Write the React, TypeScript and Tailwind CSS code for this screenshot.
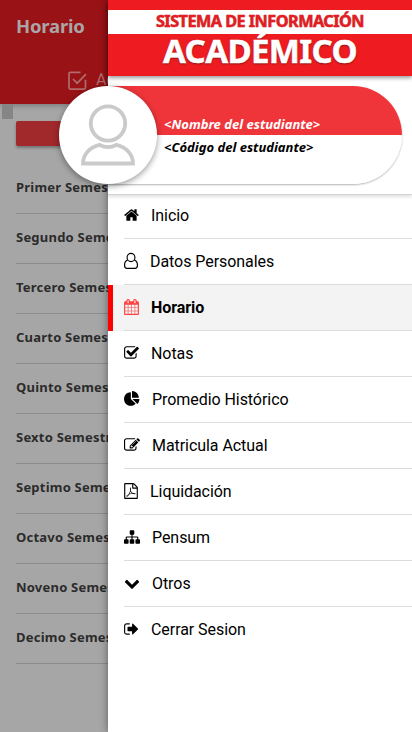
import React from "react";

type Icon = { box: string; w: string; d: string };

const icons: Record<string, Icon> = {
  home: { box: "64 0 1664 1792", w: "w-[15px]", d: "M1472 992v480q0 26-19 45t-45 19h-384v-384h-256v384h-384q-26 0-45-19t-19-45v-480q0-1 .5-3t.5-3l575-474 575 474q1 2 1 6zm223-69l-62 74q-8 9-21 11h-3q-13 0-21-7l-692-577-692 577q-12 8-24 7-13-2-21-11l-62-74q-8-10-7-23.5t11-21.5l719-599q32-26 76-26t76 26l244 204v-195q0-14 9-23t23-9h192q14 0 23 9t9 23v408l219 182q10 8 11 21.5t-7 23.5z" },
  user: { box: "0 0 1568 1792", w: "w-[14px]", d: "" },
  calendar: { box: "64 0 1664 1792", w: "w-[15px]", d: "M192 1664h288v-288h-288v288zm352 0h320v-288h-320v288zm-352-352h288v-320h-288v320zm352 0h320v-320h-320v320zm-352-384h288v-288h-288v288zm736 736h320v-288h-320v288zm-384-736h320v-288h-320v288zm768 736h288v-288h-288v288zm-384-352h320v-320h-320v320zm-352-864v-288q0-13-9.5-22.5t-22.5-9.5h-64q-13 0-22.5 9.5t-9.5 22.5v288q0 13 9.5 22.5t22.5 9.5h64q13 0 22.5-9.5t9.5-22.5zm736 864h288v-320h-288v320zm-384-384h320v-288h-320v288zm384 0h288v-288h-288v288zm32-480v-288q0-13-9.5-22.5t-22.5-9.5h-64q-13 0-22.5 9.5t-9.5 22.5v288q0 13 9.5 22.5t22.5 9.5h64q13 0 22.5-9.5t9.5-22.5zm384-64v1280q0 52-38 90t-90 38h-1408q-52 0-90-38t-38-90v-1280q0-52 38-90t90-38h128v-96q0-66 47-113t113-47h64q66 0 113 47t47 113v96h384v-96q0-66 47-113t113-47h64q66 0 113 47t47 113v96h128q52 0 90 38t38 90z" },
  check: { box: "64 0 1664 1792", w: "w-[15px]", d: "M1472 930v318q0 119-84.5 203.5t-203.5 84.5h-832q-119 0-203.5-84.5t-84.5-203.5v-832q0-119 84.5-203.5t203.5-84.5h832q63 0 117 25 15 7 18 23 3 17-9 29l-49 49q-10 10-23 10-3 0-9-2-23-6-45-6h-832q-66 0-113 47t-47 113v832q0 66 47 113t113 47h832q66 0 113-47t47-113v-254q0-13 9-22l64-64q10-10 23-10 6 0 12 3 20 8 20 29zm231-489l-814 814q-24 24-57 24t-57-24l-430-430q-24-24-24-57t24-57l110-110q24-24 57-24t57 24l263 263 647-647q24-24 57-24t57 24l110 110q24 24 24 57t-24 57z" },
  pie: { box: "0 0 1792 1792", w: "w-4", d: "M768 890l546 546q-106 108-247.5 168t-298.5 60q-209 0-385.5-103t-279.5-279.5-103-385.5 103-385.5 279.5-279.5 385.5-103v762zm187 6h773q0 157-60 298.5t-168 247.5zm709-128h-768v-768q209 0 385.5 103t279.5 279.5 103 385.5z" },
  edit: { box: "0 0 1792 1792", w: "w-4", d: "M888 1184l116-116-152-152-116 116v56h96v96h56zm440-720q-16-16-33 1l-350 350q-17 17-1 33t33-1l350-350q17-17 1-33zm80 594v190q0 119-84.5 203.5t-203.5 84.5h-832q-119 0-203.5-84.5t-84.5-203.5v-832q0-119 84.5-203.5t203.5-84.5h832q63 0 117 25 15 7 18 23 3 17-10 29l-49 49q-14 14-32 8-23-6-45-6h-832q-66 0-113 47t-47 113v832q0 66 47 113t113 47h832q66 0 113-47t47-113v-126q0-13 9-22l64-64q15-15 35-7t20 29zm-96-738l288 288-672 672h-288v-288zm444 132l-92 92-288-288 92-92q28-28 68-28t68 28l152 152q28 28 28 68t-28 68z" },
  pdf: { box: "128 0 1536 1792", w: "w-[14px]", d: "M1596 380q28 28 48 76t20 88v1152q0 40-28 68t-68 28h-1344q-40 0-68-28t-28-68v-1600q0-40 28-68t68-28h896q40 0 88 20t76 48zm-444-244v376h376q-10-29-22-41l-313-313q-12-12-41-22zm384 1528v-1024h-416q-40 0-68-28t-28-68v-416h-768v1536h1280zm-514-593q33 26 84 56 59-7 117-7 147 0 177 49 16 22 2 52 0 1-1 2l-2 2v1q-6 38-71 38-48 0-115-20t-130-53q-221 24-392 83-153 262-242 262-15 0-28-7l-24-12q-1-1-6-5-10-10-6-36 9-40 56-91.5t132-96.5q14-9 23 6 2 2 2 4 52-85 107-197 68-136 104-262-24-82-30.5-159.5t6.5-127.5q11-40 42-40h22q23 0 35 15 18 21 9 68-2 6-4 8 1 3 1 8v30q-2 123-14 192 55 164 146 238zm-576 411q52-24 137-158-51 40-87.5 84t-49.5 74zm398-920q-15 42-2 132 1-7 7-44 0-3 7-43 1-4 4-8-1-1-1-2t-1-2q-1-22-13-36 0 1-1 2v1zm-124 661q135-54 284-81-2-1-13-9.5t-16-13.5q-76-67-127-176-27 86-83 197-30 56-45 83zm646-16q-24-24-140-24 76 28 124 28 14 0 18-1 0-1-2-3z" },
  sitemap: { box: "0 0 1792 1792", w: "w-4", d: "M1792 1248v320q0 40-28 68t-68 28h-320q-40 0-68-28t-28-68v-320q0-40 28-68t68-28h96v-192h-512v192h96q40 0 68 28t28 68v320q0 40-28 68t-68 28h-320q-40 0-68-28t-28-68v-320q0-40 28-68t68-28h96v-192h-512v192h96q40 0 68 28t28 68v320q0 40-28 68t-68 28h-320q-40 0-68-28t-28-68v-320q0-40 28-68t68-28h96v-192q0-52 38-90t90-38h512v-192h-96q-40 0-68-28t-28-68v-320q0-40 28-68t68-28h320q40 0 68 28t28 68v320q0 40-28 68t-68 28h-96v192h512q52 0 90 38t38 90v192h96q40 0 68 28t28 68z" },
  chevron: { box: "0 0 1792 1792", w: "w-4", d: "M1683 808l-742 741q-19 19-45 19t-45-19l-742-741q-19-19-19-45.5t19-45.5l166-165q19-19 45-19t45 19l531 531 531-531q19-19 45-19t45 19l166 165q19 19 19 45.500t-19 45.500z" },
  exit: { box: "64 0 1664 1792", w: "w-[15px]", d: "M704 1440q0 4 1 20t.5 26.5-3 23.5-10 19.5-20.5 6.5h-320q-119 0-203.5-84.5t-84.5-203.5v-704q0-119 84.5-203.5t203.5-84.5h320q13 0 22.5 9.5t9.5 22.5q0 4 1 20t.5 26.5-3 23.5-10 19.5-20.5 6.5h-320q-66 0-113 47t-47 113v704q0 66 47 113t113 47h312l11.5 1 11.5 3 8 5.5 7 9 2 13.5zm928-544q0 26-19 45l-544 544q-19 19-45 19t-45-19-19-45v-288h-448q-26 0-45-19t-19-45v-384q0-26 19-45t45-19h448v-288q0-26 19-45t45-19 45 19l544 544q19 19 19 45z" },
};

const menu = [
  ["home", "Inicio"],
  ["user", "Datos Personales"],
  ["calendar", "Horario"],
  ["check", "Notas"],
  ["pie", "Promedio Histórico"],
  ["edit", "Matricula Actual"],
  ["pdf", "Liquidación"],
  ["sitemap", "Pensum"],
  ["chevron", "Otros"],
  ["exit", "Cerrar Sesion"],
];

const semesters = ["Primer", "Segundo", "Tercero", "Cuarto", "Quinto", "Sexto", "Septimo", "Octavo", "Noveno", "Decimo"];

function Glyph({ name, active }: { name: string; active: boolean }) {
  const icon = icons[name];
  return (
    <svg viewBox={icon.box} className={`${icon.w} mb-[2px] h-4 shrink-0 overflow-visible ${active ? "text-[#ff4141]" : "text-black"}`} fill="currentColor">
      {name === "user" ? (
        <g fill="none" stroke="currentColor" strokeWidth="130">
          <ellipse cx="784" cy="510" rx="440" ry="460" />
          <path d="M400 800C170 870 64 1090 64 1370c0 200 110 358 270 358h900c160 0 270-158 270-358 0-280-106-500-336-570" />
        </g>
      ) : (
        <path d={icon.d} />
      )}
    </svg>
  );
}

export default function App() {
  return (
    <div className="relative flex h-[732px] w-[412px] overflow-hidden bg-[#a6a6a6] font-['Noto_Sans',sans-serif]">
      <main className="w-[108px] shrink-0 whitespace-nowrap">
        <header className="flex h-[104px] flex-col justify-between bg-[#981216] pb-[14px] pl-4 pt-3 shadow-[0_2px_5px_rgba(0,0,0,0.25)]">
          <h1 className="text-[18.5px] font-bold leading-7 tracking-[-0.2px] text-[#aaa6a6]">Horario</h1>
          <div className="flex items-center gap-[9px] pl-[52px] font-[Roboto,sans-serif] text-base leading-5 text-[#b06b6c]">
            <svg viewBox="0 0 19 19" className="h-[19px] w-[19px] shrink-0" fill="none" stroke="currentColor" strokeWidth="1.7">
              <path d="M12.5 1.3H2.3a1.3 1.3 0 0 0-1.3 1.3v14.2a1.3 1.3 0 0 0 1.3 1.3h13.9a1.3 1.3 0 0 0 1.3-1.3V8.7M5 8l4.2 4.2L18 3.2" />
            </svg>
            Actual
          </div>
        </header>
        <div className="ml-[2px] h-[15px] w-[11px] bg-[#858585]" />
        <div className="ml-4 mt-[2px] h-[25px] rounded-[2px] bg-[#a1282b] shadow-[0_2px_3px_rgba(0,0,0,0.3)]" />
        <ul className="ml-4 mt-[18px]">
          {semesters.map((name) => (
            <li key={name} className="flex h-[50px] items-center border-b border-[#8b8b8b] pb-[2px] text-[13px] font-bold tracking-[0.22px] text-[#2b2b2b]">
              {name} Semestre
            </li>
          ))}
        </ul>
      </main>

      <aside className="relative flex w-[304px] shrink-0 flex-col bg-white shadow-[0_0_8px_rgba(0,0,0,0.45)]">
        <div className="flex h-[76px] shrink-0 flex-col bg-[#ee1c21] pt-[10px] shadow-[0_2px_4px_rgba(0,0,0,0.4)]">
          <div className="flex h-6 items-center justify-center bg-white pb-[2px]">
            <span className="whitespace-nowrap text-[16.3px] font-bold leading-5 tracking-[-0.55px] text-[#e51d23] [-webkit-text-stroke:0.4px_#e51d23] [text-shadow:0_0_1px_rgba(0,0,0,0.4)]">SISTEMA DE INFORMACIÓN</span>
          </div>
          <div className="flex h-[42px] items-center justify-center pb-[9px]">
            <span className="text-[33px] font-bold leading-[33px] tracking-[-0.6px] text-white [-webkit-text-stroke:0.5px_white] [text-shadow:0_1px_2px_rgba(0,0,0,0.5)]">ACADÉMICO</span>
          </div>
        </div>

        <div className="flex h-[119px] shrink-0 items-start border-b border-[#d5d5d5] pt-[10px] shadow-[0_2px_3px_rgba(0,0,0,0.12)]">
          <div className="flex h-[98px] w-[294px] flex-col overflow-hidden rounded-r-[49px] text-[13px] font-bold italic shadow-[0_1px_2px_rgba(0,0,0,0.3)]">
            <div className="flex h-[49px] items-end bg-[#ef353a] pl-14 text-white">
              <span className="whitespace-nowrap leading-[21px]">&lt;Nombre del estudiante&gt;</span>
            </div>
            <div className="flex h-[49px] items-start bg-white pl-14 text-black">
              <span className="whitespace-nowrap leading-[25px]">&lt;Código del estudiante&gt;</span>
            </div>
          </div>
        </div>
        <div className="absolute left-[-49px] top-[86px] flex h-[98px] w-[98px] items-center justify-center rounded-full bg-white shadow-[0_2px_6px_rgba(0,0,0,0.4)]">
          <svg viewBox="0 0 98 98" className="h-[98px] w-[98px]" fill="none" stroke="#cacaca" strokeWidth="3.8">
            <circle cx="49" cy="37.5" r="17.2" />
            <path d="M40.500 58.800C31 61 24 68 24 77.500h50C74 68 67 61 57.500 58.800Q49 63.500 40.500 58.800Z" />
          </svg>
        </div>

        <nav className="-mt-[2px] font-[Roboto,sans-serif] text-base tracking-[-0.06px] text-black">
          {menu.map(([icon, label], i) => {
            const active = label === "Horario";
            return (
              <div key={label} className={`flex h-[46px] ${active ? "border-l-[5px] border-[#f00] bg-[#f3f3f3] pl-[11px] font-bold" : "pl-4"}`}>
                <div className={`flex flex-1 items-center gap-3 ${i < 9 ? "border-b border-[#dcdcdc]" : "pb-px"}`}>
                  <Glyph name={icon} active={active} />
                  <span>{label}</span>
                </div>
              </div>
            );
          })}
        </nav>
      </aside>
    </div>
  );
}
